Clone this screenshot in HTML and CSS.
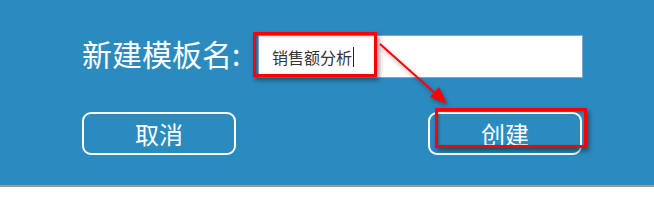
FILE: index.html
```html
<!DOCTYPE html>
<html lang="zh-CN">
<head>
  <meta charset="UTF-8">
  <title>新建模板</title>
  <link rel="stylesheet" href="styles.css">
</head>
<body>
  <div class="dialog">
    <div class="name-row">
      <label class="name-label">新建模板名:</label>
      <div class="name-input">销售额分析<span class="caret"></span></div>
    </div>
    <div class="btn-row">
      <button class="btn">取消</button>
      <button class="btn">创建</button>
    </div>

    <!-- annotation marks -->
    <div class="mark mark-input"></div>
    <div class="mark mark-create"></div>
    <svg class="mark-arrow" width="654" height="185" viewBox="0 0 654 185">
      <line x1="380" y1="44" x2="436" y2="94" stroke="#f00" stroke-width="2"/>
      <polygon points="447,104 430,97 439,87" fill="#f00"/>
    </svg>
  </div>
</body>
</html>
```

FILE: styles.css
```css
body {
  margin: 0;
  background: #fff;
  font-family: "Noto Sans CJK SC", "Noto Sans", sans-serif;
}

.dialog {
  position: relative;
  height: 187px;
  padding: 35px 0 0 82px;
  box-sizing: border-box;
  background: #2b8bbf;
  border-bottom: 2px solid #9a9a9a;
  box-shadow: 0 3px 8px rgba(0, 0, 0, 0.22);
}

.name-row {
  display: flex;
  align-items: center;
}

.name-label {
  width: 176px;
  color: #fff;
  font-size: 30px;
  line-height: 43px;
  margin-top: -6px;
}

.name-input {
  width: 325px;
  height: 43px;
  box-sizing: border-box;
  padding-left: 13px;
  display: flex;
  align-items: center;
  background: #fff;
  border: 1px solid #7ea6d8;
  color: #333;
  font-size: 16px;
}

.caret {
  display: inline-block;
  width: 0;
  height: 20px;
  margin-left: 1px;
  border-left: 1px solid #222;
}

.btn-row {
  display: flex;
  gap: 192px;
  margin-top: 34px;
}

.btn {
  width: 154px;
  height: 43px;
  background: transparent;
  border: 2px solid #fff;
  border-radius: 9px;
  color: #fff;
  font-family: inherit;
  font-size: 24px;
  padding: 0;
}

.mark {
  position: absolute;
  border: 3px solid #f00;
  box-shadow: 2px 3px 5px rgba(0, 0, 0, 0.45), inset 1px 1px 3px rgba(0, 0, 0, 0.3);
}

.mark-input {
  left: 253px;
  top: 32px;
  width: 118px;
  height: 39px;
}

.mark-create {
  left: 435px;
  top: 108px;
  width: 146px;
  height: 34px;
}

.mark-arrow {
  position: absolute;
  left: 0;
  top: 0;
  filter: drop-shadow(1px 2px 2px rgba(0, 0, 0, 0.4));
}
```
